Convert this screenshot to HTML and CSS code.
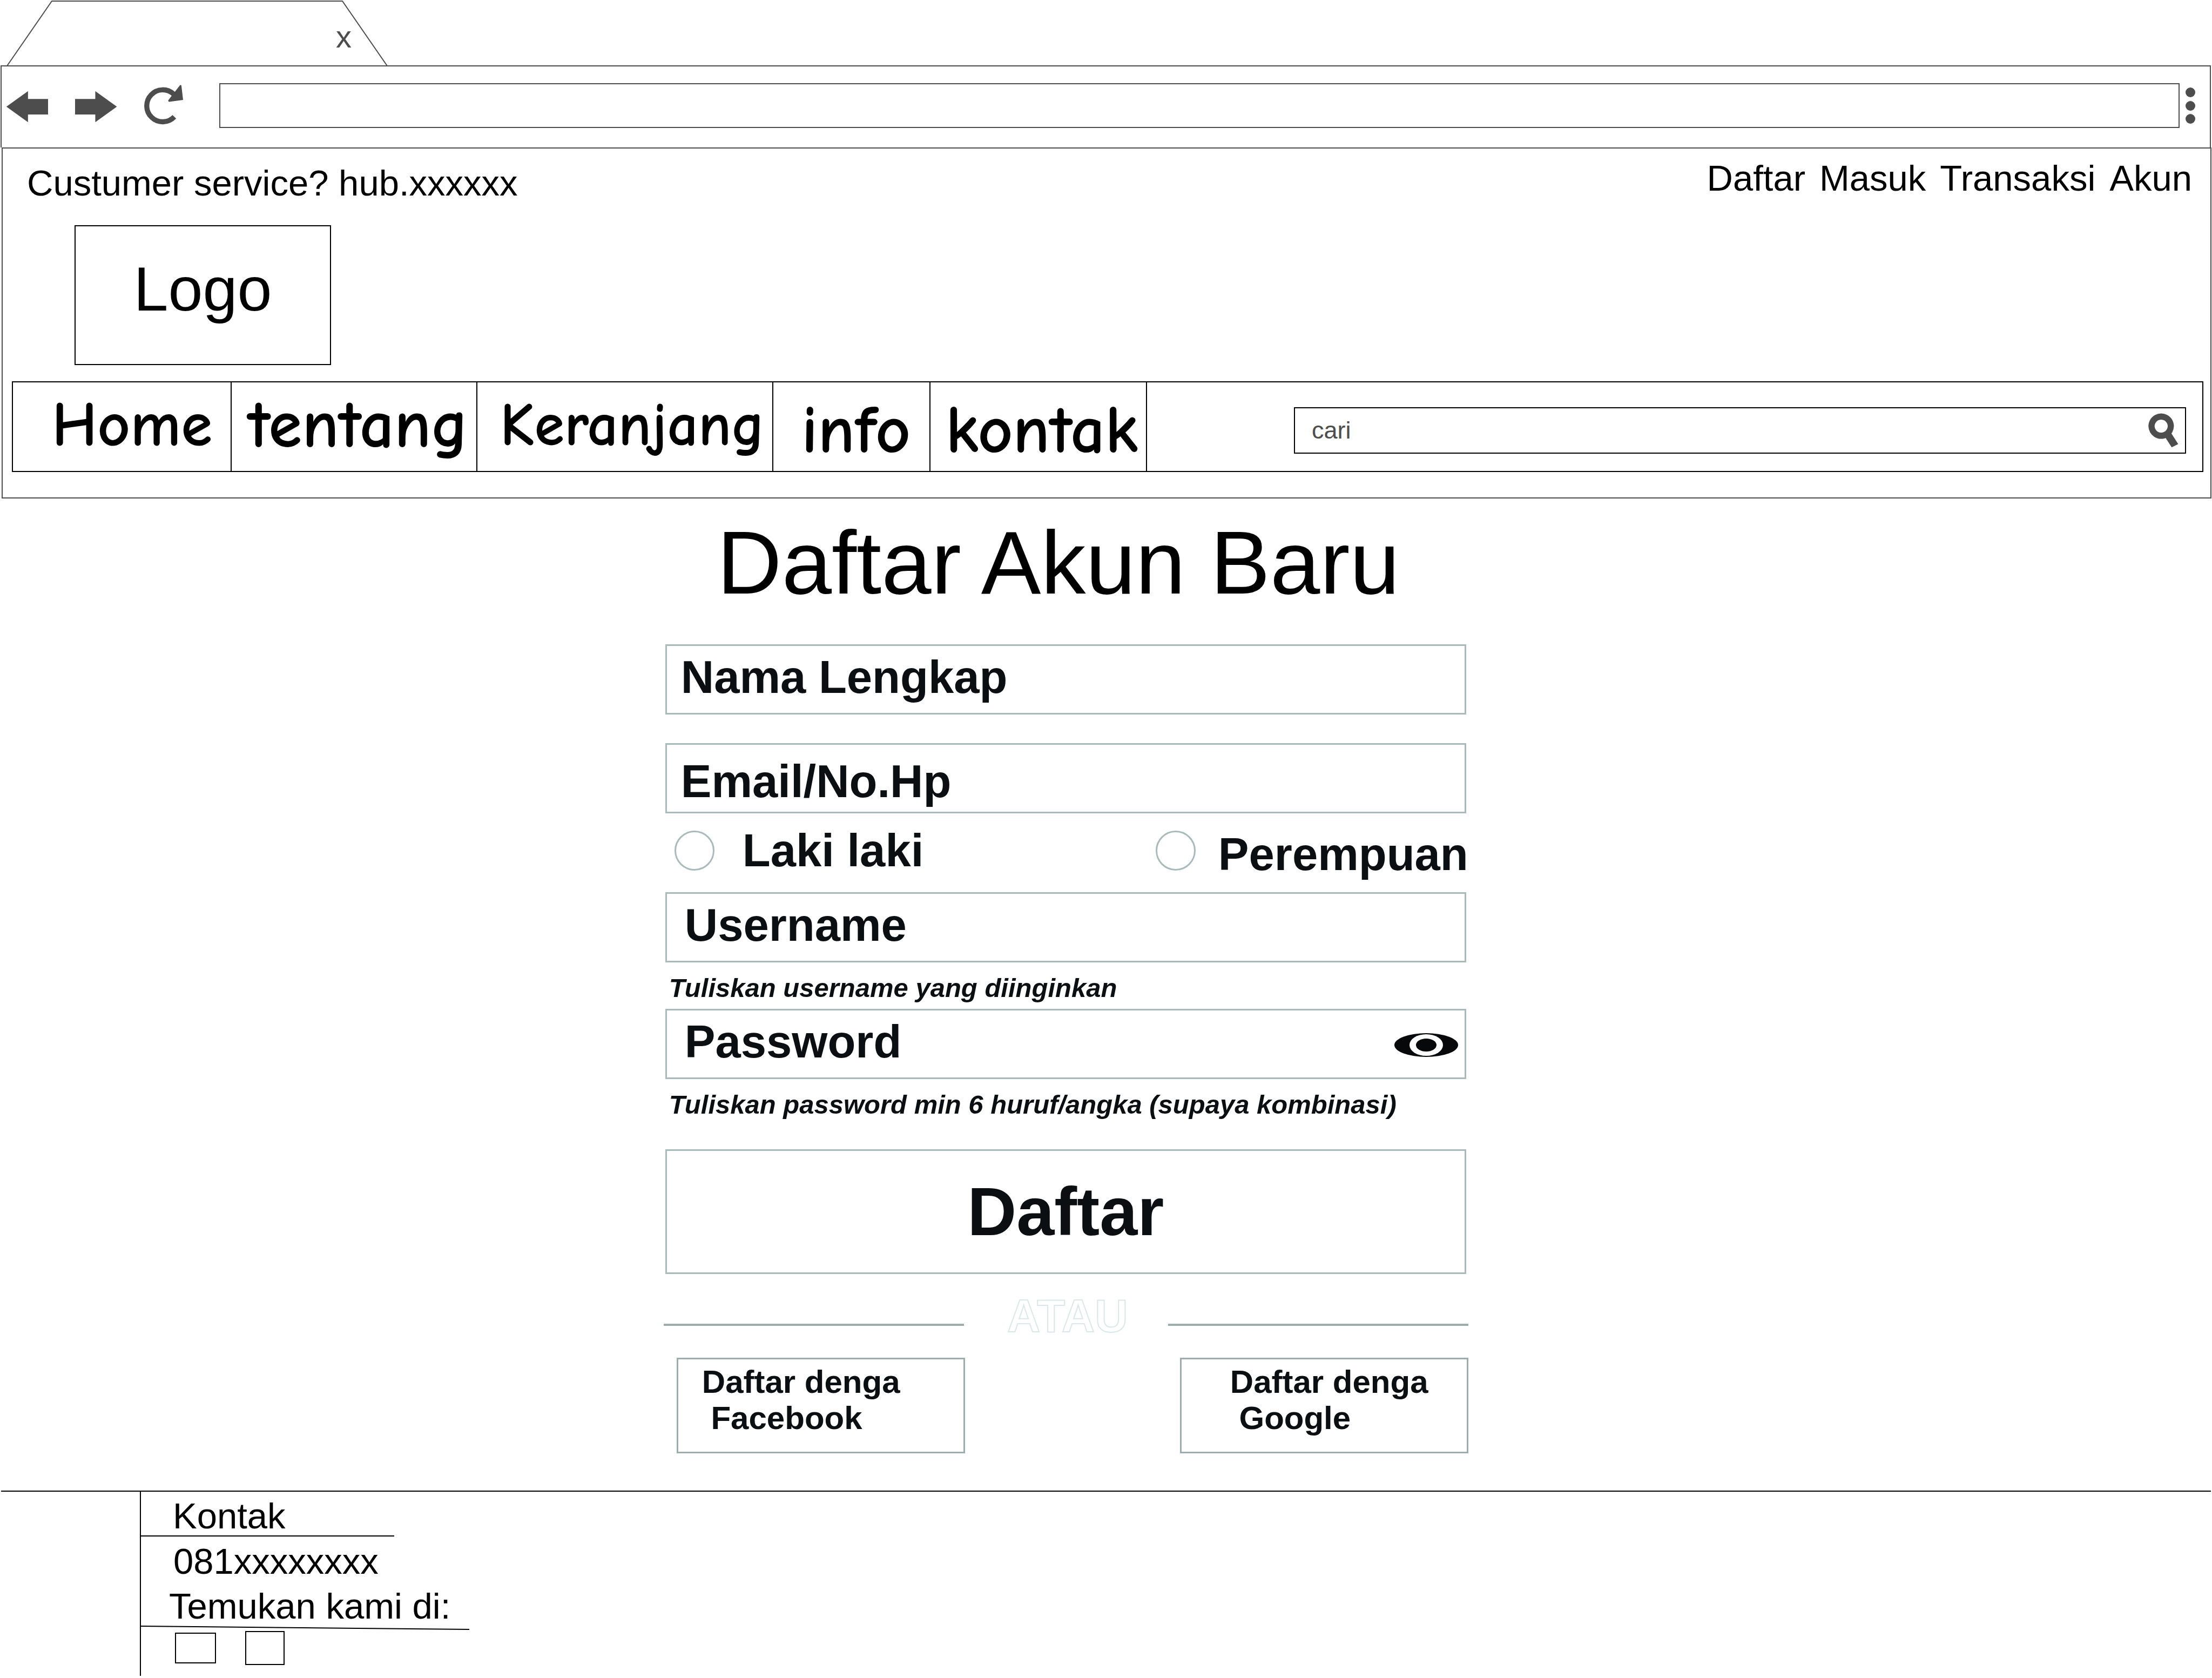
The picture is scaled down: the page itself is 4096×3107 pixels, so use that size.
FILE: index.html
```html
<!DOCTYPE html>
<html lang="id">
<head>
  <meta charset="utf-8">
  <meta name="viewport" content="width=device-width, initial-scale=1">
  <title>Daftar Akun Baru</title>
  <link rel="stylesheet" href="styles.css">
</head>
<body>
  <div class="tab">
    <svg class="tab-shape" viewBox="0 0 720 122" aria-hidden="true"><path d="M13 122 96 2H634L717 122"/></svg>
    <button class="tab-close" type="button" aria-label="Tutup tab">x</button>
  </div>

  <div class="toolbar">
    <div class="toolbar-buttons">
      <button class="icon-button" type="button" aria-label="Kembali">
        <svg width="78" height="83" viewBox="38 92 275 292"><path d="M41 245 182 144V195H313V296H182V346Z"/></svg>
      </button>
      <button class="icon-button" type="button" aria-label="Maju">
        <svg width="78" height="83" viewBox="487 92 275 292"><path d="M760 245 619 144V195H487V296H619V346Z"/></svg>
      </button>
      <button class="icon-button" type="button" aria-label="Muat ulang">
        <svg width="73" height="83" viewBox="939 92 256 292"><path class="ring" d="M1131 164A104 104 0 1 0 1135 311"/><path d="M1139 147 1172 105Q1180 102 1181 108L1192 201 1101 213Q1093 211 1095 205L1119 172Z"/></svg>
      </button>
    </div>
    <input class="address" type="text" aria-label="Alamat">
    <button class="icon-button" type="button" aria-label="Menu">
      <svg width="18" height="83" viewBox="0 0 18 83"><circle cx="9" cy="17" r="9"/><circle cx="9" cy="42" r="9"/><circle cx="9" cy="66" r="9"/></svg>
    </button>
  </div>

  <header class="site-header">
    <div class="top-row">
      <p class="service">Custumer service? hub.xxxxxx</p>
      <nav class="account-links" aria-label="Akun">
        <a href="#daftar">Daftar</a>
        <a href="#masuk">Masuk</a>
        <a href="#transaksi">Transaksi</a>
        <a href="#akun">Akun</a>
      </nav>
    </div>
    <a class="logo" href="#home">Logo</a>
    <div class="menu-bar">
      <nav class="menu" aria-label="Utama">
        <a class="menu-home" href="#home">Home</a>
        <a class="menu-about" href="#tentang">tentang</a>
        <a class="menu-cart" href="#keranjang">Keranjang</a>
        <a class="menu-info" href="#info">info</a>
        <a class="menu-contact" href="#kontak">kontak</a>
      </nav>
      <form class="search" role="search">
        <input class="search-input" type="search" placeholder="cari" aria-label="cari">
        <button class="icon-button" type="submit" aria-label="Cari">
          <svg width="56" height="64" viewBox="204 122 195 222"><path class="lens" d="M287 143a62 62 0 1 0 .1 0Z"/><path d="M316 282 355 342 397 321 353 252 330 226 318 238 294 248Z"/></svg>
        </button>
      </form>
    </div>
  </header>

  <main class="signup">
    <h1>Daftar Akun Baru</h1>
    <form class="signup-form">
      <input class="field" type="text" placeholder="Nama Lengkap" aria-label="Nama Lengkap">
      <input class="field field-email" type="text" placeholder="Email/No.Hp" aria-label="Email/No.Hp">
      <div class="choices">
        <label class="choice"><input type="radio" name="gender"><span>Laki laki</span></label>
        <label class="choice choice-low"><input type="radio" name="gender"><span>Perempuan</span></label>
      </div>
      <input class="field field-login" type="text" placeholder="Username" aria-label="Username" aria-describedby="username-hint">
      <p class="hint" id="username-hint">Tuliskan username yang diinginkan</p>
      <div class="field-wrap">
        <input class="field field-login" type="password" placeholder="Password" aria-label="Password" aria-describedby="password-hint">
        <button class="icon-button reveal" type="button" aria-label="Tampilkan password">
          <svg width="119" height="45" viewBox="0 0 119 45"><ellipse cx="59" cy="22" rx="59" ry="22"/><ellipse class="iris" cx="59" cy="22" rx="31" ry="20"/><ellipse cx="59" cy="22" rx="19" ry="12"/></svg>
        </button>
      </div>
      <p class="hint" id="password-hint">Tuliskan password min 6 huruf/angka (supaya kombinasi)</p>
      <button class="submit" type="submit">Daftar</button>
      <div class="divider"><span class="rule"></span><span class="or">ATAU</span><span class="rule"></span></div>
      <div class="social">
        <button class="social-button" type="button">Daftar denga
 Facebook</button>
        <button class="social-button social-google" type="button">Daftar denga
 Google</button>
      </div>
    </form>
  </main>

  <footer class="footer">
    <div class="contact">
      <p class="contact-title">Kontak</p>
      <p class="contact-phone">081xxxxxxxx</p>
      <p class="contact-find">Temukan kami di:</p>
      <svg class="slant" width="608" height="8" viewBox="0 0 608 8" aria-hidden="true"><path d="M0 1 608 7"/></svg>
      <div class="contact-links">
        <a class="small" href="#facebook" aria-label="Facebook"></a>
        <a class="large" href="#google" aria-label="Google"></a>
      </div>
    </div>
  </footer>
</body>
</html>
```

FILE: styles.css
```css
:root {
  --ink: #000;
  --chrome: #4d4d4d;
  --soft: #a9baba;
  --form-ink: #0b0f11;
}

* {
  box-sizing: border-box;
}

body {
  margin: 0;
  background: #fff;
  color: var(--ink);
  font-family: "Liberation Sans", Arial, sans-serif;
  font-size: 67px;
  line-height: 76px;
}

p,
h1 {
  margin: 0;
}

a {
  color: inherit;
  text-decoration: none;
}

input,
button {
  margin: 0;
  padding: 0;
  border: 0;
  border-radius: 0;
  background: none;
  color: inherit;
  font: inherit;
}

svg {
  display: block;
}

.icon-button {
  flex: none;
  fill: var(--chrome);
}

/* Browser chrome */

.tab {
  position: relative;
  display: flex;
  justify-content: flex-end;
  width: 720px;
  height: 121px;
  padding: 34px 69px 0 0;
}

.tab-shape {
  position: absolute;
  inset: 0;
  fill: none;
  stroke: var(--chrome);
  stroke-width: 2;
}

.tab-close {
  align-self: flex-start;
  color: var(--chrome);
  font-size: 58px;
  line-height: 68px;
}

.toolbar {
  display: flex;
  align-items: center;
  margin: 0 2px 0 1px;
  padding: 31px 27px 36px 8px;
  border: 2px solid var(--chrome);
  border-bottom: 0;
}

.toolbar-buttons {
  display: flex;
  gap: 50px;
}

.ring {
  fill: none;
  stroke: var(--chrome);
  stroke-width: 33;
}

.address {
  flex: 1;
  min-width: 0;
  height: 83px;
  margin: 0 11px 0 66px;
  padding: 0 20px;
  border: 2px solid var(--chrome);
}

/* Site header */

.site-header {
  margin: 0 1px 0 3px;
  padding: 17px 13px 47px 17px;
  border: 2px solid var(--chrome);
}

.top-row {
  display: flex;
  justify-content: space-between;
  align-items: flex-end;
  padding: 0 21px 0 28px;
}

.account-links {
  display: flex;
  gap: 26px;
  padding-bottom: 9px;
}

.logo {
  display: flex;
  justify-content: center;
  width: 475px;
  margin: 40px 0 0 116px;
  padding: 52px 0 75px;
  border: 2px solid var(--ink);
  font-size: 115px;
  line-height: 128px;
}

.menu-bar {
  display: flex;
  margin-top: 30px;
  border: 2px solid var(--ink);
}

.menu {
  display: flex;
  font-family: "Comic Sans MS", "Comic Neue", Lato, sans-serif;
  font-size: 126px;
  font-weight: 700;
  line-height: 140px;
}

.menu a {
  padding: 9px 0 15px;
  border-right: 2px solid var(--ink);
  white-space: nowrap;
}

.menu .menu-home {
  width: 405px;
  padding-left: 72px;
  font-size: 118px;
}

.menu .menu-about {
  width: 455px;
  padding-left: 30px;
}

.menu .menu-cart {
  width: 548px;
  padding-left: 42px;
  font-size: 113px;
}

.menu .menu-info {
  width: 291px;
  padding: 19px 0 5px 52px;
}

.menu .menu-contact {
  width: 401px;
  padding: 19px 0 5px 28px;
}

.search {
  display: flex;
  flex: 1;
  align-items: center;
  margin: 46px 30px 32px 272px;
  padding-right: 12px;
  border: 2px solid var(--ink);
}

.search-input {
  flex: 1;
  min-width: 0;
  padding-left: 31px;
  font-size: 45px;
  appearance: none;
}

.search-input::placeholder {
  color: var(--chrome);
  opacity: 1;
}

.lens {
  fill: none;
  stroke: var(--chrome);
  stroke-width: 40;
}

/* Sign-up form */

.signup {
  width: 1490px;
  max-width: 70%;
  margin-left: 30%;
  color: var(--form-ink);
}

h1 {
  padding: 24px 0 56px 99px;
  color: var(--ink);
  font-size: 166px;
  font-weight: 400;
  line-height: 190px;
  white-space: nowrap;
}

.signup-form {
  display: flex;
  flex-direction: column;
  font-size: 85px;
  font-weight: 700;
  line-height: 96px;
}

.field {
  height: 130px;
  margin: 0 4px 0 3px;
  padding: 0 26px 8px;
  border: 3px solid var(--soft);
}

.field::placeholder {
  color: inherit;
  opacity: 1;
}

.field-email {
  margin-top: 53px;
  padding: 12px 26px 0;
}

.field-login {
  padding-left: 33px;
}

.choices {
  display: flex;
  justify-content: space-between;
  padding: 21px 0 22px 20px;
}

.choice {
  display: flex;
  align-items: flex-start;
  gap: 52px;
}

.choice input {
  width: 74px;
  height: 74px;
  margin-top: 11px;
  border: 3px solid var(--soft);
  border-radius: 50%;
  appearance: none;
}

.choice-low {
  gap: 42px;
}

.choice-low span {
  padding-top: 7px;
}

.hint {
  margin: 19px 0 11px;
  padding-left: 10px;
  font-size: 49px;
  font-style: italic;
  line-height: 56px;
  white-space: nowrap;
}

.field-wrap {
  position: relative;
  display: flex;
}

.field-wrap .field {
  flex: 1;
}

.reveal {
  position: absolute;
  top: 45px;
  right: 18px;
  fill: #060809;
}

.reveal .iris {
  fill: #fff;
}

.submit {
  height: 231px;
  margin: 44px 4px 30px 3px;
  border: 3px solid var(--soft);
  font-size: 126px;
}

.divider {
  display: flex;
  align-items: center;
  justify-content: space-between;
}

.rule {
  width: 556px;
  height: 4px;
  margin-top: 31px;
  background: #9dadad;
}

.or {
  padding-left: 6px;
  color: #fff;
  -webkit-text-stroke: 2px #dde7e7;
}

.social {
  display: flex;
  justify-content: space-between;
  margin-top: 29px;
  padding-left: 24px;
}

.social-button {
  width: 534px;
  padding: 8px 0 29px 44px;
  border: 3px solid #9dadad;
  font-size: 60px;
  line-height: 67px;
  text-align: left;
  white-space: pre;
}

.social-google {
  padding-left: 90px;
}

/* Footer */

.footer {
  margin: 69px 2px 0;
  padding-left: 257px;
  border-top: 2px solid var(--ink);
  line-height: 72px;
}

.contact {
  padding-bottom: 20px;
  border-left: 2px solid var(--ink);
}

.contact-title {
  width: 469px;
  padding: 9px 0 0 59px;
  border-bottom: 2px solid var(--ink);
}

.contact-phone {
  padding: 10px 0 11px 60px;
}

.contact-find {
  padding-left: 52px;
}

.slant {
  fill: none;
  stroke: var(--ink);
  stroke-width: 2;
}

.contact-links {
  display: flex;
  gap: 54px;
  align-items: center;
  padding: 2px 0 0 63px;
}

.contact-links a {
  border: 2px solid var(--ink);
}

.small {
  width: 76px;
  height: 57px;
}

.large {
  width: 73px;
  height: 63px;
}
```
